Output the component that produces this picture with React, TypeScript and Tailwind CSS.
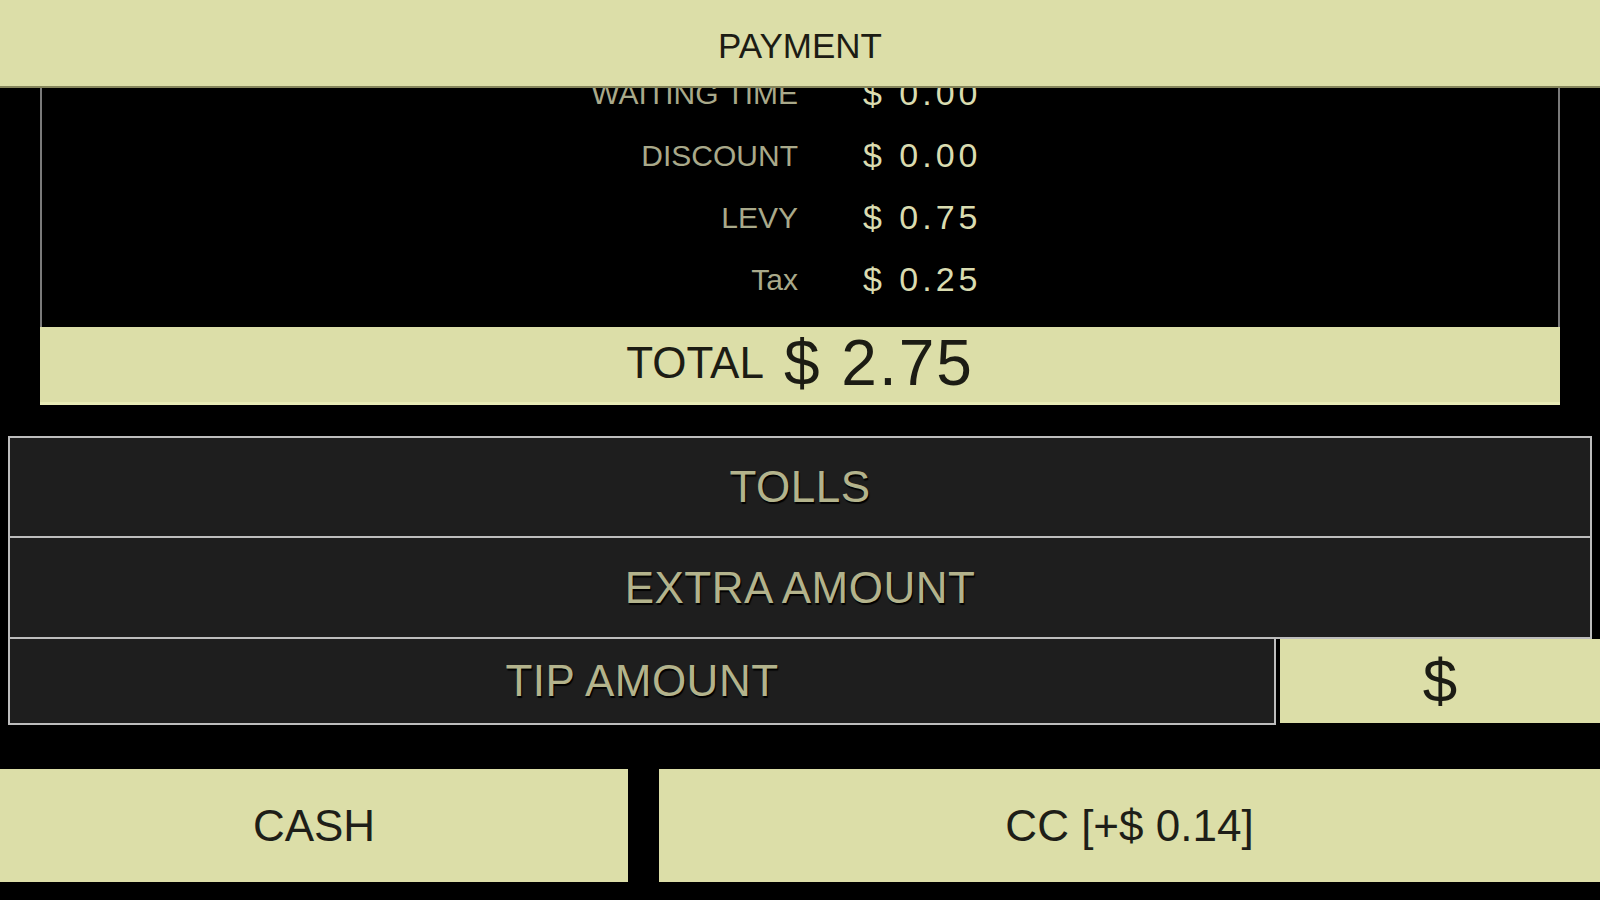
const fareRows = [
  { label: "WAITING TIME", value: "$ 0.00" },
  { label: "DISCOUNT", value: "$ 0.00" },
  { label: "LEVY", value: "$ 0.75" },
  { label: "Tax", value: "$ 0.25" },
];

function DarkButton({ label, className }: { label: string; className: string }) {
  return (
    <button
      className={`flex items-center justify-center bg-[#1e1e1e] border-[#bdbdbd] text-[44px] leading-none tracking-[0.5px] text-[#b3b38c] [text-shadow:1px_2px_1px_#000] ${className}`}
    >
      {label}
    </button>
  );
}

export default function App(): JSX.Element {
  return (
    <div className="h-[900px] w-[1600px] overflow-hidden bg-black font-['Liberation_Sans',Arial,sans-serif]">
      <header className="relative z-10 flex h-[88px] items-center justify-center border-b-2 border-[#85855c] bg-[#dcdea8] pt-[7px]">
        <span className="text-[35px] text-[#1c1c14]">PAYMENT</span>
      </header>

      {/* scrolled fare breakdown, top row sits under the header */}
      <div className="mx-[40px] h-[239px] overflow-hidden border-x-2 border-[#7a7a7a]">
        <div className="-mt-[26px]">
          {fareRows.map((row) => (
            <div key={row.label} className="flex h-[62px] items-center">
              <span className="w-[756px] text-right text-[30px] text-[#a9a98a]">
                {row.label}
              </span>
              <span className="ml-[65px] text-[34px] tracking-[4px] text-[#dadcb0]">
                {row.value}
              </span>
            </div>
          ))}
        </div>
      </div>

      <div className="mx-[40px] flex h-[78px] items-end justify-center gap-[20px] border-b-[3px] border-[#e8ebb6] bg-[#dcdea8] pb-[7px] text-[#1c1c14]">
        <span className="mb-[10px] text-[44px] leading-none">TOTAL</span>
        <span className="text-[64px] leading-none tracking-[2px]">$ 2.75</span>
      </div>

      <div className="mt-[31px] pl-2">
        <div className="mr-2 flex flex-col">
          <DarkButton label="TOLLS" className="h-[102px] border-2" />
          <DarkButton label="EXTRA AMOUNT" className="h-[101px] border-x-2 border-b-2" />
        </div>
        <div className="flex h-[86px]">
          <DarkButton label="TIP AMOUNT" className="w-[1268px] border-x-2 border-b-2" />
          <div className="mb-[2px] ml-[4px] flex flex-1 items-center justify-center bg-[#dcdea8] text-[62px] leading-none text-[#1c1c14]">
            $
          </div>
        </div>
      </div>

      <div className="mt-[44px] flex h-[113px] gap-[31px]">
        <button className="flex w-[628px] items-center justify-center bg-[#dcdea8] text-[44px] text-[#1e1e18]">
          CASH
        </button>
        <button className="flex flex-1 items-center justify-center bg-[#dcdea8] text-[44px] text-[#1e1e18]">
          CC [+$ 0.14]
        </button>
      </div>
    </div>
  );
}
